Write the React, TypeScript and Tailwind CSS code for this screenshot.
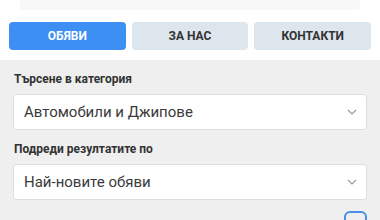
import React from 'react';

const tabs = [
  { title: 'ОБЯВИ', active: true },
  { title: 'ЗА НАС', active: false },
  { title: 'КОНТАКТИ', active: false },
];

function Chevron() {
  return (
    <svg width="10" height="6" viewBox="0 0 10 6" className="shrink-0">
      <path d="M1 1l4 4 4-4" fill="none" stroke="#9a9a9a" strokeWidth="1.2" />
    </svg>
  );
}

function SelectBox({ label, value }: { label: string; value: string }) {
  return (
    <div className="flex flex-col">
      <span className="text-[12px] font-bold text-[#333] leading-[16px] px-[1px]">{label}</span>
      <div className="mt-[7px] h-[36px] bg-white border border-[#dedede] rounded-[3px] flex items-center justify-between pl-[10px] pr-[9px]">
        <span className="text-[15px] text-[#3a3a3a] leading-none">{value}</span>
        <Chevron />
      </div>
    </div>
  );
}

export default function App() {
  return (
    <div className="w-[380px] h-[220px] overflow-hidden bg-[#efefef] font-['Roboto',sans-serif]">
      <div className="bg-white pb-[10px]">
        <div className="mx-[20px] h-[10px] bg-[#f8f8f8] rounded-b-[2px]" />
        <div className="flex gap-[6px] px-[9px] mt-[12px]">
          {tabs.map((t) => (
            <div
              key={t.title}
              className={
                'flex-1 h-[28px] rounded-[4px] flex items-center justify-center text-[12px] font-bold ' +
                (t.active ? 'bg-[#3e8ff4] text-white' : 'bg-[#dde5ed] text-[#333]')
              }
            >
              {t.title}
            </div>
          ))}
        </div>
      </div>
      <div className="px-[13px] pt-[11px] flex flex-col gap-[11px]">
        <SelectBox label="Търсене в категория" value="Автомобили и Джипове" />
        <SelectBox label="Подреди резултатите по" value="Най-новите обяви" />
      </div>
      <div className="flex justify-end pr-[13px] mt-[11px]">
        <div className="w-[23px] h-[14px] rounded-[6px] border-2 border-[#4a8de8]" />
      </div>
    </div>
  );
}
